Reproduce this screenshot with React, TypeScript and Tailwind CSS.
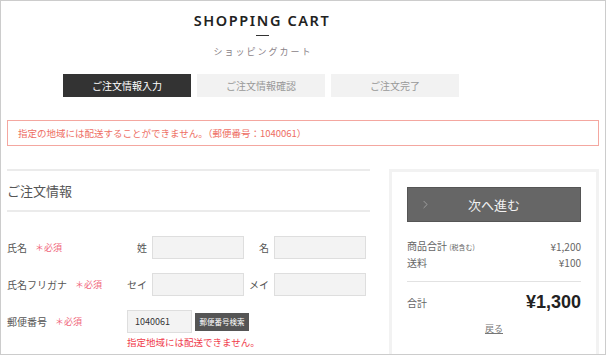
import { ChevronRight } from 'lucide-react';

const jp = { fontFamily: '"Noto Sans CJK JP", "Noto Sans", sans-serif' };

type FieldProps = {
	label: string;
	width: string;
};

const Required = () => <span className="text-[9px] text-[#f0657a]">＊必須</span>;

const Field: React.FC<FieldProps> = ({ label, width }) => (
	<div className="flex items-center">
		<span className={`${width} pr-[5px] text-right text-[10px] text-[#555]`}>{label}</span>
		<div className="h-[23px] w-[92px] border border-[#dedede] bg-[#f3f3f3]" />
	</div>
);

const Steps = () => {
	const steps = ['ご注文情報入力', 'ご注文情報確認', 'ご注文完了'];
	return (
		<div className="ml-[62px] mt-[15px] flex gap-[6px]">
			{steps.map((s, i) => (
				<div
					key={s}
					className={`flex h-[23px] w-[128px] items-center justify-center text-[10px] ${
						i === 0 ? 'bg-[#333] text-white' : 'bg-[#f2f2f2] text-[#999]'
					}`}
				>
					{s}
				</div>
			))}
		</div>
	);
};

const Summary = () => (
	<div className="h-[190px] w-[210px] border-[3px] border-[#f2f2f2] px-[15px] pt-[15px]">
		<button className="flex h-[35px] w-full items-center border border-[#555] bg-[#666] text-[13px] text-[#f2f2f2]">
			<ChevronRight size={13} strokeWidth={1} className="ml-[11px] text-[#ccc]" />
			<span className="flex-1 pr-[24px] text-center">次へ進む</span>
		</button>
		<div className="mt-[16px] flex items-center justify-between text-[10px] leading-[16px] text-[#666]">
			<span>
				商品合計 <span className="text-[7px]">(税含む)</span>
			</span>
			<span>¥1,200</span>
		</div>
		<div className="flex items-center justify-between text-[10px] leading-[16px] text-[#666]">
			<span>送料</span>
			<span>¥100</span>
		</div>
		<div className="mt-[10px] border-t border-[#e2e2e2]" />
		<div className="mt-[7px] flex items-center justify-between">
			<span className="text-[10px] text-[#666]">合計</span>
			<span className="text-[18px] font-bold text-[#222]" style={{ fontFamily: '"Liberation Sans", sans-serif' }}>
				¥1,300
			</span>
		</div>
		<div className="mt-[6px] text-center text-[9px] text-[#777] underline">戻る</div>
	</div>
);

export default function App() {
	return (
		<div className="h-[355px] w-[606px] overflow-hidden border border-[#cccccc] bg-white" style={jp}>
			<div className="w-[522px] pt-[9px] text-center">
				<h1
					className="text-[14.5px] font-semibold leading-[20px] tracking-[1.6px] text-[#222]"
					style={{ fontFamily: '"Noto Sans", sans-serif' }}
				>
					SHOPPING CART
				</h1>
				<div className="mx-auto mt-[5px] h-px w-[13px] bg-[#333]" />
				<p className="mt-[9px] pl-[2px] text-[9px] leading-[14px] tracking-[2px] text-[#8a8288]">ショッピングカート</p>
			</div>
			<Steps />
			<div className="mx-[6px] mt-[23px] flex h-[26px] items-center border border-[#f4a7a0] pl-[10px] text-[9.5px] text-[#ee6e64]">
				指定の地域には配送することができません。（郵便番号：1040061）
			</div>
			<div className="ml-[6px] mt-[23px] flex gap-[19px]">
				<div className="w-[363px]">
					<div className="flex h-[43px] items-center border-y-2 border-[#ebebeb] text-[13px] text-[#555]">
						ご注文情報
					</div>
					<div className="mt-[24px] flex flex-col gap-[14px]">
						<div className="flex items-center">
							<div className="flex w-[116px] items-center gap-[8px] text-[10px] text-[#555]">
								<span>氏名</span>
								<Required />
							</div>
							<Field label="姓" width="w-[29px]" />
							<Field label="名" width="w-[30px]" />
						</div>
						<div className="flex items-center">
							<div className="flex w-[116px] items-center gap-[8px] text-[10px] text-[#555]">
								<span>氏名フリガナ</span>
								<Required />
							</div>
							<Field label="セイ" width="w-[29px]" />
							<Field label="メイ" width="w-[30px]" />
						</div>
						<div className="flex">
							<div className="flex h-[23px] w-[120px] items-center gap-[8px] text-[10px] text-[#555]">
								<span>郵便番号</span>
								<Required />
							</div>
							<div>
								<div className="flex items-center">
									<div className="flex h-[23px] w-[65px] items-center border border-[#dedede] bg-[#f3f3f3] pl-[7px] text-[9px] text-[#333]">
										1040061
									</div>
									<button className="ml-[3px] h-[18px] w-[54px] bg-[#555] text-[7.5px] text-white">
										郵便番号検索
									</button>
								</div>
								<div className="mt-[3px] text-[9.5px] leading-[13px] text-[#f03c4c]">指定地域には配送できません。</div>
							</div>
						</div>
					</div>
				</div>
				<Summary />
			</div>
		</div>
	);
}
